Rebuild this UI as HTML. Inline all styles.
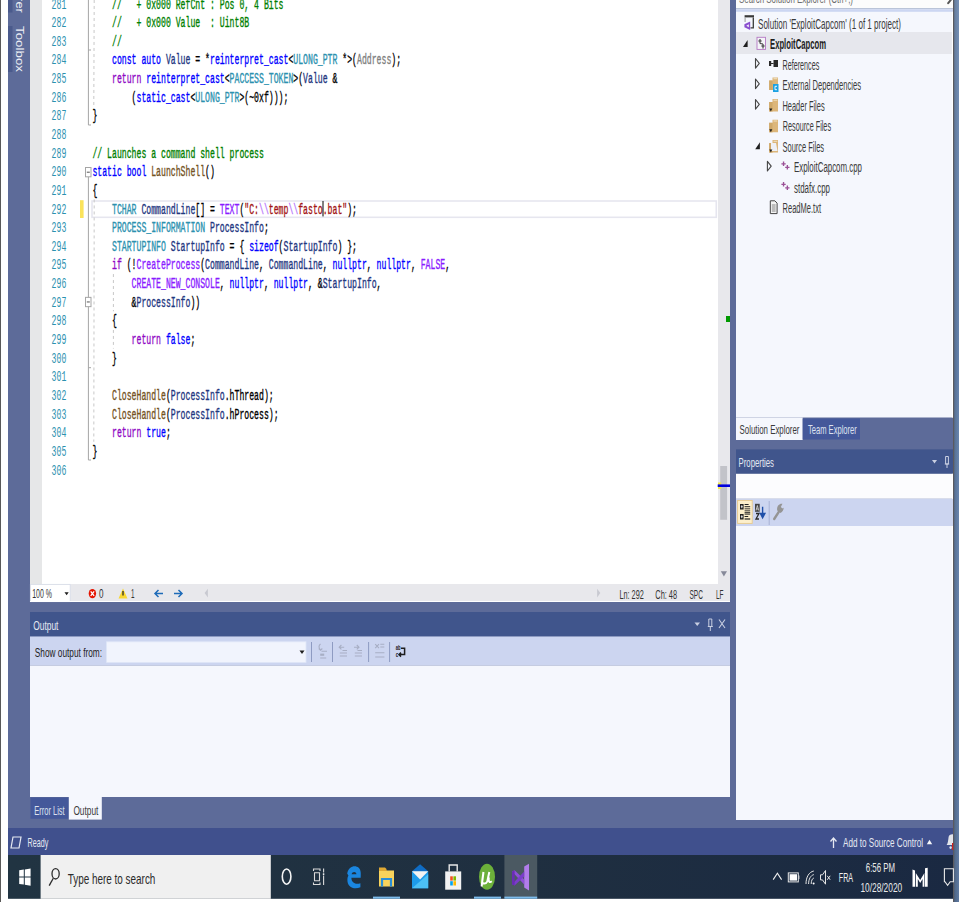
<!DOCTYPE html>
<html><head><meta charset="utf-8"><title>VS</title>
<style>html,body{margin:0;padding:0;background:#fff;width:959px;height:902px;overflow:hidden}svg{display:block}text{white-space:pre}</style>
</head><body>
<svg width="959" height="902" viewBox="0 0 959 902">
<rect x="0" y="0" width="959" height="902" fill="#ffffff" />
<rect x="8" y="0" width="945" height="855" fill="#5D6B99" />
<rect x="0" y="0" width="1" height="902" fill="#595959" />
<defs><linearGradient id="redge" x1="0" y1="0" x2="1" y2="0"><stop offset="0" stop-color="#4E6789"/><stop offset="1" stop-color="#6885AF"/></linearGradient><linearGradient id="redgev" x1="0" y1="0" x2="0" y2="1"><stop offset="0" stop-color="#fff" stop-opacity="0.1"/><stop offset="0.4" stop-color="#fff" stop-opacity="0"/><stop offset="1" stop-color="#000" stop-opacity="0.08"/></linearGradient><linearGradient id="tbar" x1="0" y1="0" x2="1" y2="0"><stop offset="0" stop-color="#213442"/><stop offset="0.55" stop-color="#1f2f40"/><stop offset="1" stop-color="#1a2942"/></linearGradient></defs>
<rect x="8" y="0" width="4.5" height="12.5" fill="#4A5A8C" />
<rect x="8" y="26" width="4.5" height="46" fill="#4A5A8C" />
<text transform="translate(16.4,12.9) rotate(90) scale(1.2,1)" text-anchor="end" font-family="Liberation Sans" font-size="10.8" fill="#EEF0F6">Server Explorer</text>
<text transform="translate(16.4,26) rotate(90)" font-family="Liberation Sans" font-size="10.8" fill="#EEF0F6" textLength="46" lengthAdjust="spacingAndGlyphs">Toolbox</text>
<rect x="30" y="0" width="12" height="584" fill="#E6E7E8" />
<rect x="42" y="0" width="676" height="584" fill="#FFFFFF" />
<rect x="718" y="0" width="12" height="584" fill="#E8E8EC" />
<rect x="720.2" y="466" width="6.9" height="53.8" fill="#C2C3C9" />
<path d="M720.8,571.2 L727,571.2 L723.9,576.6 Z" fill="#868999"/>
<rect x="718" y="482.5" width="3.2" height="6.5" fill="#F2E54A" />
<line x1="717.7" y1="485.7" x2="730" y2="485.7" stroke="#0000DD" stroke-width="2.6" />
<rect x="726" y="316" width="4" height="6" fill="#009900" />
<rect x="92" y="201" width="624.3" height="16.3" fill="none" stroke="#E6E6EF" stroke-width="1.6"/>
<rect x="80" y="200.2" width="3.6" height="17.8" fill="#FBE35A" />
<line x1="88.4" y1="0" x2="88.4" y2="125" stroke="#A5A5A5" stroke-width="1" />
<line x1="88.4" y1="50" x2="91" y2="50" stroke="#A5A5A5" stroke-width="1" />
<line x1="88.4" y1="125" x2="91" y2="125" stroke="#A5A5A5" stroke-width="1" />
<rect x="85.5" y="167.5" width="5.5" height="9.3" fill="#fff" stroke="#A5A5A5" stroke-width="1"/>
<line x1="86.8" y1="172.2" x2="89.8" y2="172.2" stroke="#555" stroke-width="1" />
<line x1="88.4" y1="177" x2="88.4" y2="460" stroke="#A5A5A5" stroke-width="1" />
<line x1="88.4" y1="460" x2="91" y2="460" stroke="#A5A5A5" stroke-width="1" />
<line x1="88.4" y1="367.7" x2="91" y2="367.7" stroke="#A5A5A5" stroke-width="1" />
<rect x="85.5" y="297.36" width="5.5" height="9.3" fill="#fff" stroke="#A5A5A5" stroke-width="1"/>
<line x1="86.8" y1="301.96000000000004" x2="89.8" y2="301.96000000000004" stroke="#555" stroke-width="1" />
<line x1="94.2" y1="0" x2="93.8" y2="106.26" stroke="#C8C8C8" stroke-width="1" stroke-dasharray="3,3"/>
<line x1="94.2" y1="199.45999999999998" x2="93.8" y2="441.78000000000003" stroke="#C8C8C8" stroke-width="1" stroke-dasharray="3,3"/>
<line x1="113.4" y1="274.02" x2="113.4" y2="311.3" stroke="#C8C8C8" stroke-width="1" stroke-dasharray="3,3"/>
<line x1="113.4" y1="329.94" x2="113.4" y2="348.58" stroke="#C8C8C8" stroke-width="1" stroke-dasharray="3,3"/>
<text x="112.0" y="8.50" font-family="Liberation Mono" font-size="14.5" font-weight="normal" fill="#008000" textLength="171.5" lengthAdjust="spacingAndGlyphs" xml:space="preserve" stroke="#008000" stroke-width="0.35">//   + 0x000 RefCnt : Pos 0, 4 Bits</text>
<text x="112.0" y="27.14" font-family="Liberation Mono" font-size="14.5" font-weight="normal" fill="#008000" textLength="137.20000000000002" lengthAdjust="spacingAndGlyphs" xml:space="preserve" stroke="#008000" stroke-width="0.35">//   + 0x000 Value  : Uint8B</text>
<text x="112.0" y="45.78" font-family="Liberation Mono" font-size="14.5" font-weight="normal" fill="#008000" textLength="9.8" lengthAdjust="spacingAndGlyphs" xml:space="preserve" stroke="#008000" stroke-width="0.35">//</text>
<text x="112.0" y="64.42" font-family="Liberation Mono" font-size="14.5" font-weight="normal" fill="#0000FF" textLength="49.0" lengthAdjust="spacingAndGlyphs" xml:space="preserve" stroke="#0000FF" stroke-width="0.35">const auto</text>
<text x="165.9" y="64.42" font-family="Liberation Mono" font-size="14.5" font-weight="normal" fill="#1F377F" textLength="24.5" lengthAdjust="spacingAndGlyphs" xml:space="preserve" stroke="#1F377F" stroke-width="0.35">Value</text>
<text x="195.3" y="64.42" font-family="Liberation Mono" font-size="14.5" font-weight="normal" fill="#000000" textLength="14.700000000000001" lengthAdjust="spacingAndGlyphs" xml:space="preserve" stroke="#000000" stroke-width="0.35">= *</text>
<text x="210.0" y="64.42" font-family="Liberation Mono" font-size="14.5" font-weight="normal" fill="#0000FF" textLength="78.4" lengthAdjust="spacingAndGlyphs" xml:space="preserve" stroke="#0000FF" stroke-width="0.35">reinterpret_cast</text>
<text x="288.4" y="64.42" font-family="Liberation Mono" font-size="14.5" font-weight="normal" fill="#000000" textLength="4.9" lengthAdjust="spacingAndGlyphs" xml:space="preserve" stroke="#000000" stroke-width="0.35">&lt;</text>
<text x="293.3" y="64.42" font-family="Liberation Mono" font-size="14.5" font-weight="normal" fill="#2B91AF" textLength="44.1" lengthAdjust="spacingAndGlyphs" xml:space="preserve" stroke="#2B91AF" stroke-width="0.35">ULONG_PTR</text>
<text x="342.3" y="64.42" font-family="Liberation Mono" font-size="14.5" font-weight="normal" fill="#000000" textLength="14.700000000000001" lengthAdjust="spacingAndGlyphs" xml:space="preserve" stroke="#000000" stroke-width="0.35">*&gt;(</text>
<text x="357.0" y="64.42" font-family="Liberation Mono" font-size="14.5" font-weight="normal" fill="#808080" textLength="34.300000000000004" lengthAdjust="spacingAndGlyphs" xml:space="preserve" stroke="#808080" stroke-width="0.35">Address</text>
<text x="391.30000000000007" y="64.42" font-family="Liberation Mono" font-size="14.5" font-weight="normal" fill="#000000" textLength="9.8" lengthAdjust="spacingAndGlyphs" xml:space="preserve" stroke="#000000" stroke-width="0.35">);</text>
<text x="112.0" y="83.06" font-family="Liberation Mono" font-size="14.5" font-weight="normal" fill="#8F08C4" textLength="29.400000000000002" lengthAdjust="spacingAndGlyphs" xml:space="preserve" stroke="#8F08C4" stroke-width="0.35">return</text>
<text x="146.3" y="83.06" font-family="Liberation Mono" font-size="14.5" font-weight="normal" fill="#0000FF" textLength="78.4" lengthAdjust="spacingAndGlyphs" xml:space="preserve" stroke="#0000FF" stroke-width="0.35">reinterpret_cast</text>
<text x="224.70000000000002" y="83.06" font-family="Liberation Mono" font-size="14.5" font-weight="normal" fill="#000000" textLength="4.9" lengthAdjust="spacingAndGlyphs" xml:space="preserve" stroke="#000000" stroke-width="0.35">&lt;</text>
<text x="229.60000000000002" y="83.06" font-family="Liberation Mono" font-size="14.5" font-weight="normal" fill="#2B91AF" textLength="63.7" lengthAdjust="spacingAndGlyphs" xml:space="preserve" stroke="#2B91AF" stroke-width="0.35">PACCESS_TOKEN</text>
<text x="293.3" y="83.06" font-family="Liberation Mono" font-size="14.5" font-weight="normal" fill="#000000" textLength="9.8" lengthAdjust="spacingAndGlyphs" xml:space="preserve" stroke="#000000" stroke-width="0.35">&gt;(</text>
<text x="303.1" y="83.06" font-family="Liberation Mono" font-size="14.5" font-weight="normal" fill="#1F377F" textLength="24.5" lengthAdjust="spacingAndGlyphs" xml:space="preserve" stroke="#1F377F" stroke-width="0.35">Value</text>
<text x="332.5" y="83.06" font-family="Liberation Mono" font-size="14.5" font-weight="normal" fill="#000000" textLength="4.9" lengthAdjust="spacingAndGlyphs" xml:space="preserve" stroke="#000000" stroke-width="0.35">&amp;</text>
<text x="131.60000000000002" y="101.70" font-family="Liberation Mono" font-size="14.5" font-weight="normal" fill="#000000" textLength="4.9" lengthAdjust="spacingAndGlyphs" xml:space="preserve" stroke="#000000" stroke-width="0.35">(</text>
<text x="136.5" y="101.70" font-family="Liberation Mono" font-size="14.5" font-weight="normal" fill="#0000FF" textLength="53.900000000000006" lengthAdjust="spacingAndGlyphs" xml:space="preserve" stroke="#0000FF" stroke-width="0.35">static_cast</text>
<text x="190.4" y="101.70" font-family="Liberation Mono" font-size="14.5" font-weight="normal" fill="#000000" textLength="4.9" lengthAdjust="spacingAndGlyphs" xml:space="preserve" stroke="#000000" stroke-width="0.35">&lt;</text>
<text x="195.3" y="101.70" font-family="Liberation Mono" font-size="14.5" font-weight="normal" fill="#2B91AF" textLength="44.1" lengthAdjust="spacingAndGlyphs" xml:space="preserve" stroke="#2B91AF" stroke-width="0.35">ULONG_PTR</text>
<text x="239.4" y="101.70" font-family="Liberation Mono" font-size="14.5" font-weight="normal" fill="#000000" textLength="49.0" lengthAdjust="spacingAndGlyphs" xml:space="preserve" stroke="#000000" stroke-width="0.35">&gt;(~0xf)));</text>
<text x="92.4" y="120.34" font-family="Liberation Mono" font-size="14.5" font-weight="normal" fill="#000000" textLength="4.9" lengthAdjust="spacingAndGlyphs" xml:space="preserve" stroke="#000000" stroke-width="0.35">}</text>
<text x="92.4" y="157.62" font-family="Liberation Mono" font-size="14.5" font-weight="normal" fill="#008000" textLength="171.5" lengthAdjust="spacingAndGlyphs" xml:space="preserve" stroke="#008000" stroke-width="0.35">// Launches a command shell process</text>
<text x="92.4" y="176.26" font-family="Liberation Mono" font-size="14.5" font-weight="normal" fill="#0000FF" textLength="53.900000000000006" lengthAdjust="spacingAndGlyphs" xml:space="preserve" stroke="#0000FF" stroke-width="0.35">static bool</text>
<text x="151.20000000000002" y="176.26" font-family="Liberation Mono" font-size="14.5" font-weight="normal" fill="#74531F" textLength="53.900000000000006" lengthAdjust="spacingAndGlyphs" xml:space="preserve" stroke="#74531F" stroke-width="0.35">LaunchShell</text>
<text x="205.10000000000002" y="176.26" font-family="Liberation Mono" font-size="14.5" font-weight="normal" fill="#000000" textLength="9.8" lengthAdjust="spacingAndGlyphs" xml:space="preserve" stroke="#000000" stroke-width="0.35">()</text>
<text x="92.4" y="194.90" font-family="Liberation Mono" font-size="14.5" font-weight="normal" fill="#000000" textLength="4.9" lengthAdjust="spacingAndGlyphs" xml:space="preserve" stroke="#000000" stroke-width="0.35">{</text>
<text x="112.0" y="213.54" font-family="Liberation Mono" font-size="14.5" font-weight="normal" fill="#2B91AF" textLength="24.5" lengthAdjust="spacingAndGlyphs" xml:space="preserve" stroke="#2B91AF" stroke-width="0.35">TCHAR</text>
<text x="141.4" y="213.54" font-family="Liberation Mono" font-size="14.5" font-weight="normal" fill="#1F377F" textLength="53.900000000000006" lengthAdjust="spacingAndGlyphs" xml:space="preserve" stroke="#1F377F" stroke-width="0.35">CommandLine</text>
<text x="195.3" y="213.54" font-family="Liberation Mono" font-size="14.5" font-weight="normal" fill="#000000" textLength="24.5" lengthAdjust="spacingAndGlyphs" xml:space="preserve" stroke="#000000" stroke-width="0.35">[] = </text>
<text x="219.8" y="213.54" font-family="Liberation Mono" font-size="14.5" font-weight="normal" fill="#8A1BFF" textLength="19.6" lengthAdjust="spacingAndGlyphs" xml:space="preserve" stroke="#8A1BFF" stroke-width="0.35">TEXT</text>
<text x="239.4" y="213.54" font-family="Liberation Mono" font-size="14.5" font-weight="normal" fill="#000000" textLength="4.9" lengthAdjust="spacingAndGlyphs" xml:space="preserve" stroke="#000000" stroke-width="0.35">(</text>
<text x="244.3" y="213.54" font-family="Liberation Mono" font-size="14.5" font-weight="normal" fill="#A31515" textLength="14.700000000000001" lengthAdjust="spacingAndGlyphs" xml:space="preserve" stroke="#A31515" stroke-width="0.35">&quot;C:</text>
<text x="259.0" y="213.54" font-family="Liberation Mono" font-size="14.5" font-weight="normal" fill="#B776FB" textLength="9.8" lengthAdjust="spacingAndGlyphs" xml:space="preserve" stroke="#B776FB" stroke-width="0.35">\\</text>
<text x="268.8" y="213.54" font-family="Liberation Mono" font-size="14.5" font-weight="normal" fill="#A31515" textLength="19.6" lengthAdjust="spacingAndGlyphs" xml:space="preserve" stroke="#A31515" stroke-width="0.35">temp</text>
<text x="288.4" y="213.54" font-family="Liberation Mono" font-size="14.5" font-weight="normal" fill="#B776FB" textLength="9.8" lengthAdjust="spacingAndGlyphs" xml:space="preserve" stroke="#B776FB" stroke-width="0.35">\\</text>
<text x="298.20000000000005" y="213.54" font-family="Liberation Mono" font-size="14.5" font-weight="normal" fill="#A31515" textLength="49.0" lengthAdjust="spacingAndGlyphs" xml:space="preserve" stroke="#A31515" stroke-width="0.35">fasto.bat&quot;</text>
<text x="347.20000000000005" y="213.54" font-family="Liberation Mono" font-size="14.5" font-weight="normal" fill="#000000" textLength="9.8" lengthAdjust="spacingAndGlyphs" xml:space="preserve" stroke="#000000" stroke-width="0.35">);</text>
<text x="112.0" y="232.18" font-family="Liberation Mono" font-size="14.5" font-weight="normal" fill="#2B91AF" textLength="93.10000000000001" lengthAdjust="spacingAndGlyphs" xml:space="preserve" stroke="#2B91AF" stroke-width="0.35">PROCESS_INFORMATION</text>
<text x="210.0" y="232.18" font-family="Liberation Mono" font-size="14.5" font-weight="normal" fill="#1F377F" textLength="53.900000000000006" lengthAdjust="spacingAndGlyphs" xml:space="preserve" stroke="#1F377F" stroke-width="0.35">ProcessInfo</text>
<text x="263.9" y="232.18" font-family="Liberation Mono" font-size="14.5" font-weight="normal" fill="#000000" textLength="4.9" lengthAdjust="spacingAndGlyphs" xml:space="preserve" stroke="#000000" stroke-width="0.35">;</text>
<text x="112.0" y="250.82" font-family="Liberation Mono" font-size="14.5" font-weight="normal" fill="#2B91AF" textLength="53.900000000000006" lengthAdjust="spacingAndGlyphs" xml:space="preserve" stroke="#2B91AF" stroke-width="0.35">STARTUPINFO</text>
<text x="170.8" y="250.82" font-family="Liberation Mono" font-size="14.5" font-weight="normal" fill="#1F377F" textLength="53.900000000000006" lengthAdjust="spacingAndGlyphs" xml:space="preserve" stroke="#1F377F" stroke-width="0.35">StartupInfo</text>
<text x="229.60000000000002" y="250.82" font-family="Liberation Mono" font-size="14.5" font-weight="normal" fill="#000000" textLength="19.6" lengthAdjust="spacingAndGlyphs" xml:space="preserve" stroke="#000000" stroke-width="0.35">= { </text>
<text x="249.20000000000002" y="250.82" font-family="Liberation Mono" font-size="14.5" font-weight="normal" fill="#0000FF" textLength="29.400000000000002" lengthAdjust="spacingAndGlyphs" xml:space="preserve" stroke="#0000FF" stroke-width="0.35">sizeof</text>
<text x="278.6" y="250.82" font-family="Liberation Mono" font-size="14.5" font-weight="normal" fill="#000000" textLength="4.9" lengthAdjust="spacingAndGlyphs" xml:space="preserve" stroke="#000000" stroke-width="0.35">(</text>
<text x="283.5" y="250.82" font-family="Liberation Mono" font-size="14.5" font-weight="normal" fill="#1F377F" textLength="53.900000000000006" lengthAdjust="spacingAndGlyphs" xml:space="preserve" stroke="#1F377F" stroke-width="0.35">StartupInfo</text>
<text x="337.40000000000003" y="250.82" font-family="Liberation Mono" font-size="14.5" font-weight="normal" fill="#000000" textLength="19.6" lengthAdjust="spacingAndGlyphs" xml:space="preserve" stroke="#000000" stroke-width="0.35">) };</text>
<text x="112.0" y="269.46" font-family="Liberation Mono" font-size="14.5" font-weight="normal" fill="#8F08C4" textLength="9.8" lengthAdjust="spacingAndGlyphs" xml:space="preserve" stroke="#8F08C4" stroke-width="0.35">if</text>
<text x="126.70000000000002" y="269.46" font-family="Liberation Mono" font-size="14.5" font-weight="normal" fill="#000000" textLength="9.8" lengthAdjust="spacingAndGlyphs" xml:space="preserve" stroke="#000000" stroke-width="0.35">(!</text>
<text x="136.5" y="269.46" font-family="Liberation Mono" font-size="14.5" font-weight="normal" fill="#8A1BFF" textLength="63.7" lengthAdjust="spacingAndGlyphs" xml:space="preserve" stroke="#8A1BFF" stroke-width="0.35">CreateProcess</text>
<text x="200.20000000000002" y="269.46" font-family="Liberation Mono" font-size="14.5" font-weight="normal" fill="#000000" textLength="4.9" lengthAdjust="spacingAndGlyphs" xml:space="preserve" stroke="#000000" stroke-width="0.35">(</text>
<text x="205.10000000000002" y="269.46" font-family="Liberation Mono" font-size="14.5" font-weight="normal" fill="#1F377F" textLength="53.900000000000006" lengthAdjust="spacingAndGlyphs" xml:space="preserve" stroke="#1F377F" stroke-width="0.35">CommandLine</text>
<text x="259.0" y="269.46" font-family="Liberation Mono" font-size="14.5" font-weight="normal" fill="#000000" textLength="9.8" lengthAdjust="spacingAndGlyphs" xml:space="preserve" stroke="#000000" stroke-width="0.35">, </text>
<text x="268.8" y="269.46" font-family="Liberation Mono" font-size="14.5" font-weight="normal" fill="#1F377F" textLength="53.900000000000006" lengthAdjust="spacingAndGlyphs" xml:space="preserve" stroke="#1F377F" stroke-width="0.35">CommandLine</text>
<text x="322.70000000000005" y="269.46" font-family="Liberation Mono" font-size="14.5" font-weight="normal" fill="#000000" textLength="9.8" lengthAdjust="spacingAndGlyphs" xml:space="preserve" stroke="#000000" stroke-width="0.35">, </text>
<text x="332.5" y="269.46" font-family="Liberation Mono" font-size="14.5" font-weight="normal" fill="#0000FF" textLength="34.300000000000004" lengthAdjust="spacingAndGlyphs" xml:space="preserve" stroke="#0000FF" stroke-width="0.35">nullptr</text>
<text x="366.80000000000007" y="269.46" font-family="Liberation Mono" font-size="14.5" font-weight="normal" fill="#000000" textLength="9.8" lengthAdjust="spacingAndGlyphs" xml:space="preserve" stroke="#000000" stroke-width="0.35">, </text>
<text x="376.6" y="269.46" font-family="Liberation Mono" font-size="14.5" font-weight="normal" fill="#0000FF" textLength="34.300000000000004" lengthAdjust="spacingAndGlyphs" xml:space="preserve" stroke="#0000FF" stroke-width="0.35">nullptr</text>
<text x="410.9" y="269.46" font-family="Liberation Mono" font-size="14.5" font-weight="normal" fill="#000000" textLength="9.8" lengthAdjust="spacingAndGlyphs" xml:space="preserve" stroke="#000000" stroke-width="0.35">, </text>
<text x="420.70000000000005" y="269.46" font-family="Liberation Mono" font-size="14.5" font-weight="normal" fill="#8A1BFF" textLength="24.5" lengthAdjust="spacingAndGlyphs" xml:space="preserve" stroke="#8A1BFF" stroke-width="0.35">FALSE</text>
<text x="445.20000000000005" y="269.46" font-family="Liberation Mono" font-size="14.5" font-weight="normal" fill="#000000" textLength="4.9" lengthAdjust="spacingAndGlyphs" xml:space="preserve" stroke="#000000" stroke-width="0.35">,</text>
<text x="131.60000000000002" y="288.10" font-family="Liberation Mono" font-size="14.5" font-weight="normal" fill="#8A1BFF" textLength="88.2" lengthAdjust="spacingAndGlyphs" xml:space="preserve" stroke="#8A1BFF" stroke-width="0.35">CREATE_NEW_CONSOLE</text>
<text x="219.8" y="288.10" font-family="Liberation Mono" font-size="14.5" font-weight="normal" fill="#000000" textLength="9.8" lengthAdjust="spacingAndGlyphs" xml:space="preserve" stroke="#000000" stroke-width="0.35">, </text>
<text x="229.60000000000002" y="288.10" font-family="Liberation Mono" font-size="14.5" font-weight="normal" fill="#0000FF" textLength="34.300000000000004" lengthAdjust="spacingAndGlyphs" xml:space="preserve" stroke="#0000FF" stroke-width="0.35">nullptr</text>
<text x="263.9" y="288.10" font-family="Liberation Mono" font-size="14.5" font-weight="normal" fill="#000000" textLength="9.8" lengthAdjust="spacingAndGlyphs" xml:space="preserve" stroke="#000000" stroke-width="0.35">, </text>
<text x="273.70000000000005" y="288.10" font-family="Liberation Mono" font-size="14.5" font-weight="normal" fill="#0000FF" textLength="34.300000000000004" lengthAdjust="spacingAndGlyphs" xml:space="preserve" stroke="#0000FF" stroke-width="0.35">nullptr</text>
<text x="308.0" y="288.10" font-family="Liberation Mono" font-size="14.5" font-weight="normal" fill="#000000" textLength="14.700000000000001" lengthAdjust="spacingAndGlyphs" xml:space="preserve" stroke="#000000" stroke-width="0.35">, &amp;</text>
<text x="322.70000000000005" y="288.10" font-family="Liberation Mono" font-size="14.5" font-weight="normal" fill="#1F377F" textLength="53.900000000000006" lengthAdjust="spacingAndGlyphs" xml:space="preserve" stroke="#1F377F" stroke-width="0.35">StartupInfo</text>
<text x="376.6" y="288.10" font-family="Liberation Mono" font-size="14.5" font-weight="normal" fill="#000000" textLength="4.9" lengthAdjust="spacingAndGlyphs" xml:space="preserve" stroke="#000000" stroke-width="0.35">,</text>
<text x="131.60000000000002" y="306.74" font-family="Liberation Mono" font-size="14.5" font-weight="normal" fill="#000000" textLength="4.9" lengthAdjust="spacingAndGlyphs" xml:space="preserve" stroke="#000000" stroke-width="0.35">&amp;</text>
<text x="136.5" y="306.74" font-family="Liberation Mono" font-size="14.5" font-weight="normal" fill="#1F377F" textLength="53.900000000000006" lengthAdjust="spacingAndGlyphs" xml:space="preserve" stroke="#1F377F" stroke-width="0.35">ProcessInfo</text>
<text x="190.4" y="306.74" font-family="Liberation Mono" font-size="14.5" font-weight="normal" fill="#000000" textLength="9.8" lengthAdjust="spacingAndGlyphs" xml:space="preserve" stroke="#000000" stroke-width="0.35">))</text>
<text x="112.0" y="325.38" font-family="Liberation Mono" font-size="14.5" font-weight="normal" fill="#000000" textLength="4.9" lengthAdjust="spacingAndGlyphs" xml:space="preserve" stroke="#000000" stroke-width="0.35">{</text>
<text x="131.60000000000002" y="344.02" font-family="Liberation Mono" font-size="14.5" font-weight="normal" fill="#8F08C4" textLength="29.400000000000002" lengthAdjust="spacingAndGlyphs" xml:space="preserve" stroke="#8F08C4" stroke-width="0.35">return</text>
<text x="165.9" y="344.02" font-family="Liberation Mono" font-size="14.5" font-weight="normal" fill="#0000FF" textLength="24.5" lengthAdjust="spacingAndGlyphs" xml:space="preserve" stroke="#0000FF" stroke-width="0.35">false</text>
<text x="190.4" y="344.02" font-family="Liberation Mono" font-size="14.5" font-weight="normal" fill="#000000" textLength="4.9" lengthAdjust="spacingAndGlyphs" xml:space="preserve" stroke="#000000" stroke-width="0.35">;</text>
<text x="112.0" y="362.66" font-family="Liberation Mono" font-size="14.5" font-weight="normal" fill="#000000" textLength="4.9" lengthAdjust="spacingAndGlyphs" xml:space="preserve" stroke="#000000" stroke-width="0.35">}</text>
<text x="112.0" y="399.94" font-family="Liberation Mono" font-size="14.5" font-weight="normal" fill="#74531F" textLength="53.900000000000006" lengthAdjust="spacingAndGlyphs" xml:space="preserve" stroke="#74531F" stroke-width="0.35">CloseHandle</text>
<text x="165.9" y="399.94" font-family="Liberation Mono" font-size="14.5" font-weight="normal" fill="#000000" textLength="4.9" lengthAdjust="spacingAndGlyphs" xml:space="preserve" stroke="#000000" stroke-width="0.35">(</text>
<text x="170.8" y="399.94" font-family="Liberation Mono" font-size="14.5" font-weight="normal" fill="#1F377F" textLength="53.900000000000006" lengthAdjust="spacingAndGlyphs" xml:space="preserve" stroke="#1F377F" stroke-width="0.35">ProcessInfo</text>
<text x="224.70000000000002" y="399.94" font-family="Liberation Mono" font-size="14.5" font-weight="normal" fill="#000000" textLength="49.0" lengthAdjust="spacingAndGlyphs" xml:space="preserve" stroke="#000000" stroke-width="0.35">.hThread);</text>
<text x="112.0" y="418.58" font-family="Liberation Mono" font-size="14.5" font-weight="normal" fill="#74531F" textLength="53.900000000000006" lengthAdjust="spacingAndGlyphs" xml:space="preserve" stroke="#74531F" stroke-width="0.35">CloseHandle</text>
<text x="165.9" y="418.58" font-family="Liberation Mono" font-size="14.5" font-weight="normal" fill="#000000" textLength="4.9" lengthAdjust="spacingAndGlyphs" xml:space="preserve" stroke="#000000" stroke-width="0.35">(</text>
<text x="170.8" y="418.58" font-family="Liberation Mono" font-size="14.5" font-weight="normal" fill="#1F377F" textLength="53.900000000000006" lengthAdjust="spacingAndGlyphs" xml:space="preserve" stroke="#1F377F" stroke-width="0.35">ProcessInfo</text>
<text x="224.70000000000002" y="418.58" font-family="Liberation Mono" font-size="14.5" font-weight="normal" fill="#000000" textLength="53.900000000000006" lengthAdjust="spacingAndGlyphs" xml:space="preserve" stroke="#000000" stroke-width="0.35">.hProcess);</text>
<text x="112.0" y="437.22" font-family="Liberation Mono" font-size="14.5" font-weight="normal" fill="#8F08C4" textLength="29.400000000000002" lengthAdjust="spacingAndGlyphs" xml:space="preserve" stroke="#8F08C4" stroke-width="0.35">return</text>
<text x="146.3" y="437.22" font-family="Liberation Mono" font-size="14.5" font-weight="normal" fill="#0000FF" textLength="19.6" lengthAdjust="spacingAndGlyphs" xml:space="preserve" stroke="#0000FF" stroke-width="0.35">true</text>
<text x="165.9" y="437.22" font-family="Liberation Mono" font-size="14.5" font-weight="normal" fill="#000000" textLength="4.9" lengthAdjust="spacingAndGlyphs" xml:space="preserve" stroke="#000000" stroke-width="0.35">;</text>
<text x="92.4" y="455.86" font-family="Liberation Mono" font-size="14.5" font-weight="normal" fill="#000000" textLength="4.9" lengthAdjust="spacingAndGlyphs" xml:space="preserve" stroke="#000000" stroke-width="0.35">}</text>
<line x1="323.00000000000006" y1="200.95999999999998" x2="323.00000000000006" y2="216.45999999999998" stroke="#000" stroke-width="1" />
<text x="51.599999999999994" y="8.50" font-family="Liberation Mono" font-size="14.5" font-weight="normal" fill="#2B91AF" textLength="14.700000000000001" lengthAdjust="spacingAndGlyphs" >281</text>
<text x="51.599999999999994" y="27.14" font-family="Liberation Mono" font-size="14.5" font-weight="normal" fill="#2B91AF" textLength="14.700000000000001" lengthAdjust="spacingAndGlyphs" >282</text>
<text x="51.599999999999994" y="45.78" font-family="Liberation Mono" font-size="14.5" font-weight="normal" fill="#2B91AF" textLength="14.700000000000001" lengthAdjust="spacingAndGlyphs" >283</text>
<text x="51.599999999999994" y="64.42" font-family="Liberation Mono" font-size="14.5" font-weight="normal" fill="#2B91AF" textLength="14.700000000000001" lengthAdjust="spacingAndGlyphs" >284</text>
<text x="51.599999999999994" y="83.06" font-family="Liberation Mono" font-size="14.5" font-weight="normal" fill="#2B91AF" textLength="14.700000000000001" lengthAdjust="spacingAndGlyphs" >285</text>
<text x="51.599999999999994" y="101.70" font-family="Liberation Mono" font-size="14.5" font-weight="normal" fill="#2B91AF" textLength="14.700000000000001" lengthAdjust="spacingAndGlyphs" >286</text>
<text x="51.599999999999994" y="120.34" font-family="Liberation Mono" font-size="14.5" font-weight="normal" fill="#2B91AF" textLength="14.700000000000001" lengthAdjust="spacingAndGlyphs" >287</text>
<text x="51.599999999999994" y="138.98" font-family="Liberation Mono" font-size="14.5" font-weight="normal" fill="#2B91AF" textLength="14.700000000000001" lengthAdjust="spacingAndGlyphs" >288</text>
<text x="51.599999999999994" y="157.62" font-family="Liberation Mono" font-size="14.5" font-weight="normal" fill="#2B91AF" textLength="14.700000000000001" lengthAdjust="spacingAndGlyphs" >289</text>
<text x="51.599999999999994" y="176.26" font-family="Liberation Mono" font-size="14.5" font-weight="normal" fill="#2B91AF" textLength="14.700000000000001" lengthAdjust="spacingAndGlyphs" >290</text>
<text x="51.599999999999994" y="194.90" font-family="Liberation Mono" font-size="14.5" font-weight="normal" fill="#2B91AF" textLength="14.700000000000001" lengthAdjust="spacingAndGlyphs" >291</text>
<text x="51.599999999999994" y="213.54" font-family="Liberation Mono" font-size="14.5" font-weight="normal" fill="#2B91AF" textLength="14.700000000000001" lengthAdjust="spacingAndGlyphs" >292</text>
<text x="51.599999999999994" y="232.18" font-family="Liberation Mono" font-size="14.5" font-weight="normal" fill="#2B91AF" textLength="14.700000000000001" lengthAdjust="spacingAndGlyphs" >293</text>
<text x="51.599999999999994" y="250.82" font-family="Liberation Mono" font-size="14.5" font-weight="normal" fill="#2B91AF" textLength="14.700000000000001" lengthAdjust="spacingAndGlyphs" >294</text>
<text x="51.599999999999994" y="269.46" font-family="Liberation Mono" font-size="14.5" font-weight="normal" fill="#2B91AF" textLength="14.700000000000001" lengthAdjust="spacingAndGlyphs" >295</text>
<text x="51.599999999999994" y="288.10" font-family="Liberation Mono" font-size="14.5" font-weight="normal" fill="#2B91AF" textLength="14.700000000000001" lengthAdjust="spacingAndGlyphs" >296</text>
<text x="51.599999999999994" y="306.74" font-family="Liberation Mono" font-size="14.5" font-weight="normal" fill="#2B91AF" textLength="14.700000000000001" lengthAdjust="spacingAndGlyphs" >297</text>
<text x="51.599999999999994" y="325.38" font-family="Liberation Mono" font-size="14.5" font-weight="normal" fill="#2B91AF" textLength="14.700000000000001" lengthAdjust="spacingAndGlyphs" >298</text>
<text x="51.599999999999994" y="344.02" font-family="Liberation Mono" font-size="14.5" font-weight="normal" fill="#2B91AF" textLength="14.700000000000001" lengthAdjust="spacingAndGlyphs" >299</text>
<text x="51.599999999999994" y="362.66" font-family="Liberation Mono" font-size="14.5" font-weight="normal" fill="#2B91AF" textLength="14.700000000000001" lengthAdjust="spacingAndGlyphs" >300</text>
<text x="51.599999999999994" y="381.30" font-family="Liberation Mono" font-size="14.5" font-weight="normal" fill="#2B91AF" textLength="14.700000000000001" lengthAdjust="spacingAndGlyphs" >301</text>
<text x="51.599999999999994" y="399.94" font-family="Liberation Mono" font-size="14.5" font-weight="normal" fill="#2B91AF" textLength="14.700000000000001" lengthAdjust="spacingAndGlyphs" >302</text>
<text x="51.599999999999994" y="418.58" font-family="Liberation Mono" font-size="14.5" font-weight="normal" fill="#2B91AF" textLength="14.700000000000001" lengthAdjust="spacingAndGlyphs" >303</text>
<text x="51.599999999999994" y="437.22" font-family="Liberation Mono" font-size="14.5" font-weight="normal" fill="#2B91AF" textLength="14.700000000000001" lengthAdjust="spacingAndGlyphs" >304</text>
<text x="51.599999999999994" y="455.86" font-family="Liberation Mono" font-size="14.5" font-weight="normal" fill="#2B91AF" textLength="14.700000000000001" lengthAdjust="spacingAndGlyphs" >305</text>
<text x="51.599999999999994" y="474.50" font-family="Liberation Mono" font-size="14.5" font-weight="normal" fill="#2B91AF" textLength="14.700000000000001" lengthAdjust="spacingAndGlyphs" >306</text>
<rect x="30" y="584" width="700" height="18" fill="#E8E8EC" />
<rect x="30.4" y="584.4" width="39.8" height="17.2" fill="#FFFFFF" stroke="#D9DDE8" stroke-width="0.9"/>
<line x1="30" y1="601.5" x2="730" y2="601.5" stroke="#FFFFFF" stroke-width="1" />
<text x="32.2" y="598.00" font-family="Liberation Sans" font-size="12.8" font-weight="normal" fill="#333333" textLength="19.8" lengthAdjust="spacingAndGlyphs" >100 %</text>
<path d="M64.5,592.2 L68.7,592.2 L66.6,595.2 Z" fill="#1E1E1E"/>
<ellipse cx="92.4" cy="593.6" rx="3.7" ry="4.7" fill="#E51400"/>
<path d="M90.7,591.4 L94.1,595.8 M94.1,591.4 L90.7,595.8" stroke="#fff" stroke-width="1.3"/>
<text x="99" y="598.20" font-family="Liberation Sans" font-size="12.8" font-weight="normal" fill="#333333" textLength="4.5" lengthAdjust="spacingAndGlyphs" >0</text>
<path d="M123,588.5 L127.5,598.5 L118.5,598.5 Z" fill="#F8D732"/>
<line x1="123" y1="591" x2="123" y2="595.5" stroke="#1E1E1E" stroke-width="1.2" />
<text x="131" y="598.20" font-family="Liberation Sans" font-size="12.8" font-weight="normal" fill="#333333" textLength="3.5" lengthAdjust="spacingAndGlyphs" >1</text>
<path d="M163,593.5 L155.5,593.5 M158.5,590 L155,593.5 L158.5,597" stroke="#1E6BB8" stroke-width="1.5" fill="none"/>
<path d="M174,593.5 L181.5,593.5 M178.5,590 L182,593.5 L178.5,597" stroke="#1E6BB8" stroke-width="1.5" fill="none"/>
<path d="M207.9,588.8 L204.6,593.1 L207.9,597.4 Z" fill="#C8C9D1"/>
<path d="M597.1,588.8 L600.3,593.1 L597.1,597.4 Z" fill="#C8C9D1"/>
<text x="619.4" y="598.80" font-family="Liberation Sans" font-size="12.8" font-weight="normal" fill="#333333" textLength="24.4" lengthAdjust="spacingAndGlyphs" >Ln: 292</text>
<text x="655.3" y="598.80" font-family="Liberation Sans" font-size="12.8" font-weight="normal" fill="#333333" textLength="21.8" lengthAdjust="spacingAndGlyphs" >Ch: 48</text>
<text x="689.5" y="598.80" font-family="Liberation Sans" font-size="12.8" font-weight="normal" fill="#333333" textLength="13.4" lengthAdjust="spacingAndGlyphs" >SPC</text>
<text x="716" y="598.80" font-family="Liberation Sans" font-size="12.8" font-weight="normal" fill="#333333" textLength="7.5" lengthAdjust="spacingAndGlyphs" >LF</text>
<rect x="30" y="612" width="700" height="24.5" fill="#40558C" />
<text x="33.2" y="629.67" font-family="Liberation Sans" font-size="13" font-weight="normal" fill="#E6E9F2" textLength="25.2" lengthAdjust="spacingAndGlyphs" >Output</text>
<path d="M694.5,622.5 L700,622.5 L697.25,626 Z" fill="#C9CFE2"/>
<path d="M708.8,619 h3 v7.5 h-3 z M710.3,626.5 v4.5 M707.8,626.5 h5" stroke="#C9CFE2" stroke-width="1" fill="none"/>
<path d="M719,619.5 L725,628 M725,619.5 L719,628" stroke="#C9CFE2" stroke-width="1.1"/>
<rect x="30" y="636.5" width="700" height="29" fill="#CCD5F0" />
<text x="34.8" y="656.60" font-family="Liberation Sans" font-size="12.8" font-weight="normal" fill="#1E1E1E" textLength="67.2" lengthAdjust="spacingAndGlyphs" >Show output from:</text>
<rect x="106.6" y="641.8" width="199.4" height="20.6" fill="#F1F4FD" stroke="#DFE6F8" stroke-width="0.8"/>
<path d="M299.5,650.5 L304.5,650.5 L302,654 Z" fill="#1E1E1E"/>
<line x1="311.5" y1="642" x2="311.5" y2="662" stroke="#8E9BC2" stroke-width="1" />
<line x1="332.5" y1="642" x2="332.5" y2="662" stroke="#8E9BC2" stroke-width="1" />
<line x1="368.6" y1="642" x2="368.6" y2="662" stroke="#8E9BC2" stroke-width="1" />
<line x1="389.6" y1="642" x2="389.6" y2="662" stroke="#8E9BC2" stroke-width="1" />
<g stroke="#A7AEC4" stroke-width="1.1" fill="none"><path d="M320.5,644 C318.5,645.5 318.5,648 320.5,650 M318.8,648.5 l1.7,1.8 l1.8,-1.8 M321.5,651.3 h5.5 M320.2,658 h6"/><rect x="320.2" y="653.6" width="4" height="2.2" fill="#A7AEC4" stroke="none"/><path d="M339.2,647.2 h5 M341.4,645 l-2.2,2.2 l2.2,2.2 M342.5,650.5 h4.5 M339.8,653 h7.2 M339.8,656 h7.2"/><path d="M354,647.2 h5 M356.8,645 l2.2,2.2 l-2.2,2.2 M357.5,650.5 h4.5 M354.8,653 h7.2 M354.8,656 h7.2"/><path d="M375.2,644.2 l3.8,4 M379,644.2 l-3.8,4 M380.3,644.2 h4 M380.3,647 h4 M375.2,652.8 h9.2 M375.2,657 h9.2"/></g>
<g fill="#1E1E1E"><text x="395.8" y="650" font-family="Liberation Sans" font-size="6.5" font-weight="bold" textLength="4.8" lengthAdjust="spacingAndGlyphs">ab</text><text x="395.8" y="656.6" font-family="Liberation Sans" font-size="6.5" font-weight="bold" textLength="2.6" lengthAdjust="spacingAndGlyphs">c</text></g>
<path d="M401,648.2 h3.6 v6.4 h-5.4 M401,652.6 l-2,2 l2,2" stroke="#1E1E1E" stroke-width="1.5" fill="none"/>
<rect x="30" y="665.5" width="700" height="131.5" fill="#F5F7FD" />
<rect x="30.5" y="797.5" width="38.3" height="21.25" fill="#44589A" />
<text x="34.25" y="814.61" font-family="Liberation Sans" font-size="13.4" font-weight="normal" fill="#DDE2F0" textLength="30.45" lengthAdjust="spacingAndGlyphs" >Error List</text>
<rect x="68.8" y="797" width="33" height="22.6" fill="#F5F7FD" />
<text x="73.4" y="814.51" font-family="Liberation Sans" font-size="13.4" font-weight="normal" fill="#3A3A3A" textLength="25" lengthAdjust="spacingAndGlyphs" >Output</text>
<rect x="736" y="0" width="217" height="417.5" fill="#F5F7FD" />
<rect x="736" y="0" width="217" height="8" fill="#FCFCFC" />
<rect x="736" y="8" width="217" height="1.3" fill="#BAC4D8" />
<rect x="736" y="9.3" width="217" height="2.5" fill="#CCD6F2" />
<text x="739" y="3.44" font-family="Liberation Sans" font-size="13.5" font-weight="normal" fill="#6D6D6D" textLength="114" lengthAdjust="spacingAndGlyphs" >Search Solution Explorer (Ctrl+;)</text>
<path d="M948.2,3.2 L951.5,-1" stroke="#555" stroke-width="2" stroke-linecap="round"/>
<rect x="736" y="32" width="217" height="22" fill="#E6E7ED" />
<text x="758" y="28.62" font-family="Liberation Sans" font-size="14" font-weight="normal" fill="#3A3A3A" textLength="143" lengthAdjust="spacingAndGlyphs" >Solution &#x27;ExploitCapcom&#x27; (1 of 1 project)</text>
<text x="770" y="49.12" font-family="Liberation Sans" font-size="14" font-weight="bold" fill="#1E1E1E" textLength="56" lengthAdjust="spacingAndGlyphs" >ExploitCapcom</text>
<text x="782.5" y="69.62" font-family="Liberation Sans" font-size="14" font-weight="normal" fill="#3A3A3A" textLength="36.8" lengthAdjust="spacingAndGlyphs" >References</text>
<text x="782.5" y="90.12" font-family="Liberation Sans" font-size="14" font-weight="normal" fill="#3A3A3A" textLength="78.5" lengthAdjust="spacingAndGlyphs" >External Dependencies</text>
<text x="782.5" y="110.62" font-family="Liberation Sans" font-size="14" font-weight="normal" fill="#3A3A3A" textLength="42.1" lengthAdjust="spacingAndGlyphs" >Header Files</text>
<text x="782.8" y="131.12" font-family="Liberation Sans" font-size="14" font-weight="normal" fill="#3A3A3A" textLength="48.2" lengthAdjust="spacingAndGlyphs" >Resource Files</text>
<text x="782.6" y="151.62" font-family="Liberation Sans" font-size="14" font-weight="normal" fill="#3A3A3A" textLength="41.4" lengthAdjust="spacingAndGlyphs" >Source Files</text>
<text x="794" y="172.12" font-family="Liberation Sans" font-size="14" font-weight="normal" fill="#3A3A3A" textLength="68" lengthAdjust="spacingAndGlyphs" >ExploitCapcom.cpp</text>
<text x="794" y="192.62" font-family="Liberation Sans" font-size="14" font-weight="normal" fill="#3A3A3A" textLength="36" lengthAdjust="spacingAndGlyphs" >stdafx.cpp</text>
<text x="782.6" y="213.12" font-family="Liberation Sans" font-size="14" font-weight="normal" fill="#3A3A3A" textLength="38.4" lengthAdjust="spacingAndGlyphs" >ReadMe.txt</text>
<g><rect x="744.6" y="15.2" width="9.4" height="2.2" fill="#3A3A3A"/><path d="M753.3,17.4 V27.8 H750.5" stroke="#3A3A3A" stroke-width="1.3" fill="none"/><path d="M745.1,17.4 V22" stroke="#9A9A9A" stroke-width="1" fill="none"/><path d="M750.2,21.5 V30 L744.4,27.3 V24.2 Z" fill="#8A4FCF"/><path d="M748.8,24.3 L746.3,25.75 L748.8,27.2 Z" fill="#F6F7FB"/></g>
<path d="M743,47 L747.6,40 L747.6,47 Z" fill="#1E1E1E"/>
<rect x="757" y="37.3" width="8.5" height="12.1" fill="#F4F4F8" stroke="#B478C4" stroke-width="0.9"/><path d="M758.3,41 h3.4 M760,39 v4.5 M761.3,46 h3.4 M763,44 v4.5 M760,43.5 l3,0.5" stroke="#3A3A3A" stroke-width="1.1" fill="none"/>
<path d="M755.5,58.5 L759.3,63.3 L755.5,68.1 Z" fill="none" stroke="#454545" stroke-width="1.1" stroke-linejoin="round"/>
<path d="M755.5,79.0 L759.3,83.8 L755.5,88.6 Z" fill="none" stroke="#454545" stroke-width="1.1" stroke-linejoin="round"/>
<path d="M755.5,99.5 L759.3,104.3 L755.5,109.1 Z" fill="none" stroke="#454545" stroke-width="1.1" stroke-linejoin="round"/>
<path d="M755.2,149.3 L759.9,142.3 L759.9,149.3 Z" fill="#1E1E1E"/>
<path d="M767.4,161.39999999999998 L771.1999999999999,166.2 L767.4,171.0 Z" fill="none" stroke="#454545" stroke-width="1.1" stroke-linejoin="round"/>
<g fill="#2A2A2A"><rect x="769" y="61" width="2.2" height="5"/><rect x="773.5" y="60" width="4.5" height="7"/><rect x="771" y="63" width="2.6" height="1"/></g>
<g><path d="M772.5,77.4 h5.5 v12.6 h-8.8 v-9.5 h3.3 z" fill="#DCB67A"/><rect x="773.5" y="78.2" width="3.8" height="1" fill="#F1E2C2"/><path d="M769.2,80.5 h3.3 v9.5 h-3.3 z" fill="#CFA869"/><rect x="773" y="84" width="5.5" height="8" fill="#1BA1E2"/><path d="M777,86.3 h-2 v3.4 h2" stroke="#fff" stroke-width="0.9" fill="none"/></g>
<g><path d="M772.5,98.9 h5.5 v12.6 h-8.8 v-9.5 h3.3 z" fill="#DCB67A"/><rect x="773.5" y="99.7" width="3.8" height="1" fill="#F1E2C2"/><path d="M769.2,102.0 h3.3 v9.5 h-3.3 z" fill="#CFA869"/><path d="M769.3,108.5 h3 l-1.5,3 z" fill="#1E1E1E"/></g>
<g><path d="M772.5,119.7 h5.5 v12.6 h-8.8 v-9.5 h3.3 z" fill="#DCB67A"/><rect x="773.5" y="120.5" width="3.8" height="1" fill="#F1E2C2"/><path d="M769.2,122.8 h3.3 v9.5 h-3.3 z" fill="#CFA869"/><path d="M769.3,129.3 h3 l-1.5,3 z" fill="#1E1E1E"/></g>
<g><path d="M772.5,140.0 h5.5 v12.6 h-8.8 v-9.5 h3.3 z" fill="#DCB67A"/><rect x="773.5" y="140.8" width="3.8" height="1" fill="#F1E2C2"/><path d="M769.2,143.1 h3.3 v9.5 h-3.3 z" fill="#CFA869"/><path d="M771,143.0 h5 l1.5,8 h-6.5 z" fill="#EEF0F5"/><path d="M769.3,149.6 h3 l-1.5,3 z" fill="#1E1E1E"/></g>
<g stroke="#9B4F96" stroke-width="1.35" fill="none"><path d="M781.4,163.8 h4.3 M783.55,161.5 v4.6 M785.1999999999999,167.3 h4.3 M787.35,165.0 v4.6"/></g>
<g stroke="#9B4F96" stroke-width="1.35" fill="none"><path d="M781.4,184.3 h4.3 M783.55,182 v4.6 M785.1999999999999,187.8 h4.3 M787.35,185.5 v4.6"/></g>
<g><path d="M770.3,200.8 h4.6 l2.2,2.4 v10.4 h-6.8 z" fill="#F4F4F4" stroke="#454545" stroke-width="1"/><path d="M771.8,205 h3.8 M771.8,207 h3.8 M771.8,209 h3.8 M771.8,211 h3.8" stroke="#6A6A6A" stroke-width="0.8"/></g>
<rect x="736" y="417.5" width="66.7" height="22.5" fill="#F5F7FD" />
<text x="739.5" y="434.31" font-family="Liberation Sans" font-size="13.4" font-weight="normal" fill="#3A3A3A" textLength="60" lengthAdjust="spacingAndGlyphs" >Solution Explorer</text>
<rect x="802.7" y="418.5" width="57.3" height="21" fill="#44589A" />
<text x="808" y="434.31" font-family="Liberation Sans" font-size="13.4" font-weight="normal" fill="#DDE2F0" textLength="48.8" lengthAdjust="spacingAndGlyphs" >Team Explorer</text>
<rect x="736" y="449.4" width="217" height="24.4" fill="#40558C" />
<text x="738.6" y="467.04" font-family="Liberation Sans" font-size="13.5" font-weight="normal" fill="#E6E9F2" textLength="35.4" lengthAdjust="spacingAndGlyphs" >Properties</text>
<path d="M932,460 L937,460 L934.5,463.5 Z" fill="#C9CFE2"/>
<path d="M945.6,456.5 h2.8 v7.5 h-2.8 z M947,464 v4 M944.8,464 h4.4" stroke="#C9CFE2" stroke-width="1" fill="none"/>
<rect x="736" y="473.8" width="217" height="25" fill="#FCFCFE" />
<rect x="736" y="498.8" width="217" height="27.2" fill="#CCD5F0" />
<rect x="737.6" y="500.4" width="14.6" height="23" fill="#FCEFCB" stroke="#E8C98A" stroke-width="0.9"/>
<g fill="#222"><rect x="740" y="504" width="3.6" height="5.5"/><rect x="740" y="514" width="3.6" height="5.5"/><rect x="744.6" y="504" width="4" height="1"/><rect x="744.6" y="506.2" width="5.6" height="1"/><rect x="744.6" y="508.4" width="5.6" height="0.9"/><rect x="744.6" y="510.4" width="5.6" height="0.9"/><rect x="744.6" y="512.2" width="5.6" height="0.9"/><rect x="744.6" y="513.6" width="5.6" height="1"/><rect x="744.6" y="516" width="3.6" height="1"/><rect x="744.6" y="518.4" width="5.6" height="1.2"/></g><path d="M741.8,505.2 v3 M740.8,506.7 h2 M741.8,515.2 v3 M740.8,516.7 h2" stroke="#fff" stroke-width="0.8"/>
<g><rect x="755" y="503.8" width="4.7" height="8" fill="#444"/><path d="M756,510.5 l1.35,-5 l1.35,5 M756.5,509 h1.7" stroke="#eee" stroke-width="0.7" fill="none"/><path d="M756,513.5 h3 l-3,5.5 h3" stroke="#2a2a2a" stroke-width="1.3" fill="none"/><path d="M762.6,506.8 v10 M760.4,513.5 l2.2,4.3 l2.3,-4.3 z" stroke="#1F4FA8" stroke-width="1.4" fill="#1F4FA8"/></g>
<line x1="769.2" y1="501" x2="769.2" y2="525" stroke="#A8B3D5" stroke-width="1" />
<path d="M774.2,519 L778.8,511.8" stroke="#959595" stroke-width="2.4" stroke-linecap="round"/><path d="M777.2,510.5 C776.5,506 779.5,503 782.5,503.8 L780.8,507 L782.5,508.5 C784.2,506 784.2,511 780.5,513 Z" fill="#959595"/>
<rect x="736" y="526" width="217" height="294" fill="#F5F7FD" />
<rect x="953" y="0" width="6" height="902" fill="url(#redge)" />
<rect x="953" y="0" width="6" height="902" fill="url(#redgev)" />
<line x1="953.6" y1="0" x2="953.6" y2="902" stroke="#5A5A60" stroke-width="1.2" />
<line x1="952.4" y1="11.8" x2="952.4" y2="417.5" stroke="#FFFFFF" stroke-width="1" />
<line x1="952.4" y1="473.8" x2="952.4" y2="498.8" stroke="#FFFFFF" stroke-width="1" />
<line x1="952.4" y1="526" x2="952.4" y2="820" stroke="#FFFFFF" stroke-width="1" />
<rect x="8" y="828" width="945" height="27" fill="#40508D" />
<path d="M13,837 h8 l-2,11 h-8 z" fill="none" stroke="#E6E9F2" stroke-width="1.2"/>
<text x="27.5" y="847.47" font-family="Liberation Sans" font-size="13" font-weight="normal" fill="#E6E9F2" textLength="20.75" lengthAdjust="spacingAndGlyphs" >Ready</text>
<path d="M833.5,848 v-9 M830.5,841.5 l3,-3.5 l3,3.5" stroke="#E6E9F2" stroke-width="1.3" fill="none"/>
<text x="843" y="846.87" font-family="Liberation Sans" font-size="13" font-weight="normal" fill="#E6E9F2" textLength="80" lengthAdjust="spacingAndGlyphs" >Add to Source Control</text>
<path d="M926.8,844.2 L929.5,839.8 L932.2,844.2 Z" fill="#F4F5FA"/>
<path d="M946.6,845 C948,843.6 948.2,840 948.6,837 C949,835 950.5,834 953,834.2 V845 Z" fill="#E2E4EA"/><ellipse cx="950.6" cy="847.6" rx="1.2" ry="1.4" fill="#E2E4EA"/><rect x="952" y="843" width="1.2" height="7" fill="#D02020"/>
<rect x="8" y="855" width="945" height="43.8" fill="url(#tbar)" />
<rect x="40.6" y="855" width="230.2" height="43.8" fill="#F0F0F0" />
<g fill="#fff"><path d="M19.2,870.3 L23.8,869.6 V876.6 H19.2 Z M24.8,869.4 L30.6,868.5 V876.6 H24.8 Z M19.2,877.6 H23.8 V884.6 L19.2,883.9 Z M24.8,877.6 H30.6 V885.7 L24.8,884.8 Z"/></g>
<g stroke="#2b2b2b" stroke-width="1.3" fill="none"><ellipse cx="55.6" cy="873.8" rx="3.6" ry="5.2"/><path d="M53.3,878.3 L49.2,885.6"/></g>
<text x="67.7" y="883.79" font-family="Liberation Sans" font-size="14.5" font-weight="normal" fill="#2B2B2B" textLength="87.7" lengthAdjust="spacingAndGlyphs" >Type here to search</text>
<ellipse cx="286.6" cy="876.6" rx="4.3" ry="7.6" fill="none" stroke="#F4F4F4" stroke-width="1.6"/>
<g stroke="#DADADA" stroke-width="1.1" fill="none"><path d="M313.5,871 v-2 h6.5 v2 M313.5,882.5 v2 h6.5 v-2 M314.5,872.8 h5 v8 h-5 z M323.6,868.5 v4 M323.6,875.5 v9.5"/></g><circle cx="323.6" cy="874.1" r="0.9" fill="#fff"/>
<g fill="#1A86E0"><path d="M347.2,873.5 C348.5,866.5 355,864.6 358.7,867.8 C361.2,870 360.9,874.5 360.7,877.8 L351.4,877.8 C351.3,882.3 355.3,885.2 360.4,883.2 L360.4,887.3 C353.8,890.1 346.9,886.9 347.4,879.2 C347.6,875.5 350.4,872.4 353.3,871.8 C351.2,872.6 349.2,874.5 348.8,876.2 Z M351.6,874.2 L356.4,874.2 C356.3,871.4 352.3,871.2 351.6,874.2 Z"/></g>
<g><path d="M379,869 h6 l1.5,1.5 h7.5 v16 h-15 z" fill="#F8D35C"/><path d="M379,867.5 h6 l1.5,1.5 v2 h-7.5 z" fill="#E0A934"/><path d="M382,886.5 v-7.5 h9 v7.5" fill="none" stroke="#2C8FD6" stroke-width="2.2"/></g>
<rect x="373" y="896.6" width="27" height="2.1" fill="#7DBCEC" />
<g><path d="M412,871.2 L420.1,864.3 L428.2,871.2 Z" fill="#0F6CC4"/><path d="M412,871.2 h16.2 v17.1 h-16.2 z" fill="#1D9BEA"/><path d="M412,871.2 h16.2 l-8.1,8.3 z" fill="#F2F2F2"/><path d="M412,888.3 l16.2,-14 v14 z" fill="#4CC0F5"/></g>
<g><rect x="445.2" y="871.4" width="16" height="18.3" fill="#F2F2F2"/><path d="M449.2,871.6 v-6.6 h8 v6.6" fill="none" stroke="#E8E8E8" stroke-width="1.4"/><rect x="450.2" y="876.3" width="2.6" height="4.3" fill="#F25022"/><rect x="453.4" y="876.3" width="2.6" height="4.3" fill="#7FBA00"/><rect x="450.2" y="881.2" width="2.6" height="4.3" fill="#00A4EF"/><rect x="453.4" y="881.2" width="2.6" height="4.3" fill="#FFB900"/></g>
<g><ellipse cx="487" cy="876.7" rx="8" ry="13" fill="#6CB03A"/><path d="M483.5,872 L481.6,886.5 M483.3,873 L482.2,881 C481.9,884.2 485.8,884.6 487.3,881.4 L489.3,872 M488.8,877.5 C488.3,881.5 489.5,883 491.8,881.3" stroke="#fff" stroke-width="2" fill="none"/></g>
<rect x="474" y="896.6" width="27" height="2.1" fill="#7DBCEC" />
<rect x="504.4" y="855" width="32.8" height="43.8" fill="#4B5962" />
<g><path d="M524.2,866.5 L529,863.7 V890.4 L524.2,887.6 Z" fill="#B27CEB"/><path d="M512,871.5 L514.6,870.3 L524.2,879.6 V884.6 Z" fill="#8E4FD8"/><path d="M512,884.2 L514.6,885.5 L524.2,876.4 V871.5 Z" fill="#7B3CCB"/><path d="M512,871.5 L514.6,870.3 V885.5 L512,884.2 Z" fill="#6A2DB5"/></g>
<rect x="504.4" y="896.6" width="32.8" height="2.1" fill="#7DBCEC" />
<path d="M773.2,879.6 L777.4,873.2 L781.6,879.6" stroke="#EEE" stroke-width="1.1" fill="none"/>
<rect x="788.3" y="872.9" width="10" height="9" fill="none" stroke="#E6E6E6" stroke-width="1"/><rect x="789.6" y="874.2" width="7.4" height="6.4" fill="#fff"/><rect x="798.4" y="875.5" width="1" height="3.6" fill="#ddd"/>
<g stroke="#E6E6E6" stroke-width="1" fill="none"><path d="M806,884 C806,877 809,872 813.8,871 M808.6,884 C808.6,879 810.6,875.5 813.8,874.6 M811.2,884 C811.2,880.5 812.3,878.6 813.8,878"/></g><circle cx="813.6" cy="883.4" r="1" fill="#fff"/>
<g stroke="#E6E6E6" stroke-width="1" fill="none"><path d="M820.5,874.8 h2 l3,-4.3 v13.7 l-3,-4.3 h-2 z M827.2,875.8 l3,4 M830.2,875.8 l-3,4"/></g>
<text x="838.8" y="881.87" font-family="Liberation Sans" font-size="13" font-weight="normal" fill="#F0F0F0" textLength="14.3" lengthAdjust="spacingAndGlyphs" >FRA</text>
<text x="865.8" y="872.08" font-family="Liberation Sans" font-size="13.3" font-weight="normal" fill="#EAEAEA" textLength="29.3" lengthAdjust="spacingAndGlyphs" >6:56 PM</text>
<text x="860.4" y="892.18" font-family="Liberation Sans" font-size="13.3" font-weight="normal" fill="#EAEAEA" textLength="41.8" lengthAdjust="spacingAndGlyphs" >10/28/2020</text>
<g fill="#fff"><path d="M912.5,869.5 L915,870.5 V886.7 H912.5 Z M925,868.3 L927.7,867.8 V886.7 H925 Z M915.8,873 L920.2,880 L924.4,873 V886.7 H922.6 V879 L920.2,883 L917.8,879 V886.7 H915.8 Z"/></g>
<path d="M944.4,868.8 h9 v13 h-3.2 l-2.6,3.6 l-2.6,-3.6 h-0.6 z" fill="none" stroke="#EAEAEA" stroke-width="1.1"/>
</svg>
</body></html>
